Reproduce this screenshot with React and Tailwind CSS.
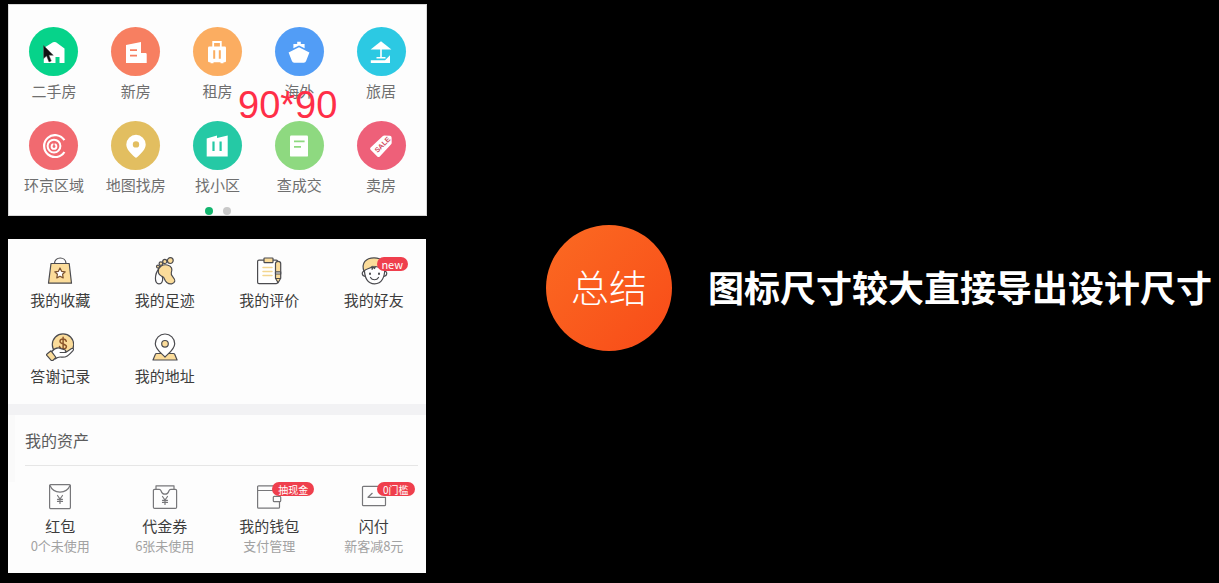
const line = '#4b4b4f';
const cream = '#fbdc9a';

function Glyph({ children }) {
  return (
    <svg viewBox="0 0 24 24" className="size-6" fill="none" aria-hidden="true">
      {children}
    </svg>
  );
}

function Outline({ children, stroke = line }) {
  return (
    <svg
      viewBox="0 0 28 28"
      className="size-7"
      fill="none"
      stroke={stroke}
      strokeWidth="1.2"
      strokeLinejoin="round"
      strokeLinecap="round"
      aria-hidden="true"
    >
      {children}
    </svg>
  );
}

const services = [
  {
    label: '二手房',
    color: 'bg-[#06d38a]',
    cursor: true,
    icon: (
      <path fill="#fff" d="M1.8 8 11 2.3q1.6-.8 3 0L22.5 8.4V23h-5v-6h-4v6H1.8z" />
    ),
  },
  {
    label: '新房',
    color: 'bg-[#f77f61]',
    icon: (
      <>
        <path fill="#fff" d="M2 5 17 2v11h4.5q1.2 0 1.2 1.2V23H2z" />
        <path stroke="#f77f61" strokeWidth="1.7" d="M6 10.2h7M6 15.7h7" />
      </>
    ),
  },
  {
    label: '租房',
    color: 'bg-[#fbad61]',
    icon: (
      <>
        <path stroke="#fff" strokeWidth="1.8" d="M8.2 7V2h7.6v5" />
        <rect x="3" y="6.5" width="18" height="15.7" rx="1.2" fill="#fff" />
        <path fill="#fff" d="M5.5 22h3v1.2h-3zM15.5 22h3v1.2h-3z" />
        <path stroke="#fbad61" strokeWidth="2" d="M9.2 10.3v8.4M14.8 10.3v8.4" />
      </>
    ),
  },
  {
    label: '海外',
    color: 'bg-[#529df6]',
    icon: (
      <>
        <path fill="#fff" d="M10.2 1.7h3.6v2.2h3.8v4.3L12 5.6 6.4 8.2V3.9h3.8z" />
        <path fill="#fff" d="m12 7.2 10.4 5.3-3.3 8.6q-.6 1.6-2.3 1.6H7.2q-1.7 0-2.3-1.6L1.6 12.5z" />
      </>
    ),
  },
  {
    label: '旅居',
    color: 'bg-[#2cc9e3]',
    icon: (
      <>
        <path fill="#fff" d="M12 1.3 22.4 9.6H1.6z" />
        <path stroke="#fff" strokeWidth="1.6" d="M12 9v9.500M7.500 17.700h9" />
        <path fill="#fff" d="M1.800 20.300H16l5-5V23H1.800z" />
      </>
    ),
  },
  {
    label: '环京区域',
    color: 'bg-[#f16a70]',
    icon: (
      <>
        <path stroke="#fff" strokeWidth="2.2" d="M22.4 6.2A11 11 0 1 0 22.4 18" />
        <circle cx="12" cy="12.1" r="6.4" stroke="#fff" strokeWidth="2" />
        <circle cx="12" cy="12.5" r="2.4" stroke="#fff" strokeWidth="1.9" />
        <path stroke="#f16a70" strokeWidth="1.2" d="M12 8.2v3" />
      </>
    ),
  },
  {
    label: '地图找房',
    color: 'bg-[#e2be60]',
    icon: (
      <path
        fill="#fff"
        fillRule="evenodd"
        d="M12 .8a9.7 9.7 0 0 0-9.7 9.7c0 5 4.7 8.7 8.4 12.6q1.3 1.1 2.6 0c3.7-3.9 8.4-7.6 8.4-12.6A9.7 9.7 0 0 0 12 .8m0 6.4a3.2 3.2 0 1 1 0 6.4 3.2 3.2 0 0 1 0-6.4"
      />
    ),
  },
  {
    label: '找小区',
    color: 'bg-[#25c9a5]',
    icon: (
      <>
        <path fill="#fff" d="M1.7 4.6 12 1.5v2.6l10.7-2.6v20.9h-21z" />
        <path stroke="#25c9a5" strokeWidth="2.2" d="M8.500 7.500v9.400M15.600 7.500v9.400" />
      </>
    ),
  },
  {
    label: '查成交',
    color: 'bg-[#8ed980]',
    icon: (
      <>
        <rect x="3" y="1.6" width="18" height="21" rx="1.2" fill="#fff" />
        <path stroke="#8ed980" strokeWidth="1.8" d="M7 7.4h10.600M7 12.800h7" />
      </>
    ),
  },
  {
    label: '卖房',
    color: 'bg-[#ee6079]',
    icon: (
      <>
        <path fill="#fff" d="M13.6 2.2q.8-.7 1.8-.7l5.5.3q1.6.1 1.700 1.700l.1 5.300q0 1-.8 1.800L10.800 22.500q-1.300 1.200-2.500 0L1.600 15.700q-1.100-1.200 0-2.300z" />
        <text
          x="0"
          y="0"
          transform="translate(8.500 19) rotate(-45)"
          fill="#d04a60"
          className="font-['Liberation_Sans'] text-[7px] font-bold"
        >
          SALE
        </text>
      </>
    ),
  },
];

const shortcuts = [
  {
    label: '我的收藏',
    icon: (
      <>
        <path d="M8.500 6.500C8.500-.8 20-.8 20 6.500" />
        <path fill={cream} d="M5 6.500h18.200l2.300 19.700h-23z" />
        <path
          fill="#fff"
          stroke="#79512f"
          d="m14 11 1.600 3.300 3.600.5-2.600 2.500.6 3.600-3.200-1.700-3.200 1.700.6-3.600-2.600-2.500 3.600-.5z"
        />
      </>
    ),
  },
  {
    label: '我的足迹',
    icon: (
      <>
        <path fill="#fff" d="M8 11.500C3.500 17 3 26.800 8 26.800c3 0 4-3 3.600-6z" />
        <path
          fill={cream}
          d="M7.300 14.500c0-5 4.700-7.500 9-6.500 4.800 1.100 5.200 4.600 4 7.600-1.200 3.400 4.200 5.200 3.500 8.500-.7 3-5 3.700-8 1.400-3-2.500-1.800-5-4.300-6-2.700-1-4.200-2.500-4.200-5z"
        />
        <circle cx="19.300" cy="3.600" r="2.900" fill={cream} />
        <circle cx="13.800" cy="4.400" r="2.100" fill={cream} />
        <circle cx="9.900" cy="6.600" r="1.800" fill={cream} />
        <circle cx="7" cy="9.600" r="1.500" fill={cream} />
      </>
    ),
  },
  {
    label: '我的评价',
    icon: (
      <>
        <rect x="2.600" y="3.200" width="20" height="23.400" rx="1.400" fill="#fff" />
        <rect x="9" y="1" width="9" height="4.600" rx=".6" fill={cream} />
        <path stroke="#f3d690" strokeWidth="1.500" d="M8 10.500h9M8 14.500h9M8 18.500h9" />
        <path fill={cream} d="M20.500 6.500q0-2.200 2.600-2.200t2.600 2.200v14.800l-2.600 4.500-2.600-4.500z" />
        <path d="M20.500 17h5.200v-2.200h-5.200zM20.800 21.500h4.600" fill="#fff" />
      </>
    ),
  },
  {
    label: '我的好友',
    badge: 'new',
    badgeSize: 'h-3.5 w-[31px] text-[11px]',
    icon: (
      <>
        <path fill="#fff" d="M4.500 14.500c-3-.7-3.200 4.500.6 4.800M24.500 14.500c3-.7 3.200 4.500-.6 4.800" />
        <path fill="#fff" d="M4.300 11c0 9.500 3.200 15.800 10.300 15.800S24.800 20.500 24.800 11L20 6H8z" />
        <path
          fill={cream}
          d="M4 14.500C1 6 6 .8 14 .8S27 6 25 14l-2.500-3-7-1.500-1 2-.5-2.200-2 3 .3-3c-3 3-6.800 2-8.300 5.200z"
        />
        <path d="M10 16.500v.5M19 16.500v.5" strokeWidth="2" />
        <path d="M10.500 20.500c1.700 3 6.300 3 8 0" />
      </>
    ),
  },
  {
    label: '答谢记录',
    icon: (
      <>
        <circle cx="17" cy="11.600" r="10.700" fill={cream} />
        <path
          stroke="#8b552b"
          strokeWidth="1.500"
          d="M20.300 8.300C19.600 5 13.800 5.300 14 8.500c.2 3 6.400 2 6.400 5.100 0 3.200-6.200 3.200-6.900-.1M17.100 4.200v13"
        />
        <path
          fill="#fff"
          d="M5.500 18.800c3-3.600 6.300-4.700 9.500-3.200l3.600 1.200c2 .8 1.500 2.700-.5 2.700h-4 5.500l6-4c2-.7 2.400 1 1.200 2.300-4 4.500-6.800 7-11.500 6.300-3-.5-4 .2-5.800 1.700z"
        />
        <path fill={cream} d="m1 21 4-3.200 5 6.700-3.200 3q-1 .6-1.800-.4l-4.200-4.700q-.6-.8.2-1.400z" />
      </>
    ),
  },
  {
    label: '我的地址',
    icon: (
      <>
        <path fill={cream} d="M5.500 20.500h17q.8 0 1.200.8l2.400 5.700H2l2.400-5.700q.3-.8 1.100-.8z" />
        <path fill="#fff" d="M14 1a9.700 9.700 0 0 0-9.700 9.700C4.300 16 9.500 19.500 14 24c4.500-4.500 9.700-8 9.700-13.300A9.700 9.700 0 0 0 14 1z" />
        <circle cx="14" cy="10.800" r="3.300" fill={cream} />
      </>
    ),
  },
];

const assets = [
  {
    label: '红包',
    note: '0个未使用',
    icon: (
      <>
        <rect x="3.600" y="2.600" width="20.800" height="24" rx="1" />
        <path d="M4 3.500c3.500 8.700 16.500 8.700 20 0" />
        <path d="m11.500 13.500 2.500 3.500 2.500-3.500M14 17v4.500M11.500 17.300h5M11.500 19.400h5" />
      </>
    ),
  },
  {
    label: '代金券',
    note: '6张未使用',
    icon: (
      <>
        <path d="M5 7V3.800h18V7" />
        <path d="M3.600 7.300h4.700c1 0 1.300.4 1.700 1.400 1.500 4.600 6.500 4.600 8 0 .4-1 .7-1.400 1.700-1.400h4.700q1.200 0 1.200 1.200v16.700q0 1.200-1.200 1.200H3.600q-1.200 0-1.200-1.200V8.500q0-1.200 1.200-1.200z" />
        <path d="m11.500 14.500 2.500 3.500 2.500-3.500M14 18v4.500M11.500 18.300h5M11.500 20.400h5" />
      </>
    ),
  },
  {
    label: '我的钱包',
    note: '支付管理',
    badge: '抽现金',
    badgeSize: 'h-3.5 w-[42px] text-[10px]',
    icon: (
      <>
        <path d="M24.500 14.300V3.800H3.600q-1 0-1 1v20.400q0 1 1 1h19.900q1 0 1-1v-5.500M2.600 8.500h21.900" />
        <rect x="18.300" y="14.300" width="7.400" height="5.400" rx="1" />
      </>
    ),
  },
  {
    label: '闪付',
    note: '新客减8元',
    badge: '0门槛',
    badgeSize: 'h-3.5 w-[38px] text-[10px]',
    icon: (
      <path d="M25.500 10V4.300h-22q-1 0-1 1v17.400q0 1 1 1h21q1 0 1-1v-7.400H8l4.200-4" />
    ),
  },
];

function Badge({ item }) {
  if (!item.badge) return null;
  return (
    <span
      className={`absolute left-[17px] top-0 flex items-center justify-center whitespace-nowrap rounded-full bg-[#ef3f4d] text-white ${item.badgeSize}`}
    >
      {item.badge}
    </span>
  );
}

function Cursor() {
  return (
    <svg viewBox="0 0 12 18" className="absolute left-3.5 top-[18px] h-[18px] w-3" aria-hidden="true">
      <path d="M.6.6v13l3-2.700 2.400 6 2.300-1-2.400-5.700h4.400z" fill="#111" stroke="#555" strokeWidth=".5" />
    </svg>
  );
}

function ServiceCard() {
  return (
    <section className="relative border border-[#d8d8d8] bg-[#fdfdfd] px-1 pt-[22px]">
      <ul className="grid grid-cols-5 gap-y-5">
        {services.map((s) => (
          <li key={s.label}>
            <a href="#" className="flex flex-col items-center gap-[5px]">
              <span className={`relative flex size-[49px] items-center justify-center rounded-full ${s.color}`}>
                <Glyph>{s.icon}</Glyph>
                {s.cursor && <Cursor />}
              </span>
              <span className="text-[15px] leading-5 text-[#6f6f6f]">{s.label}</span>
            </a>
          </li>
        ))}
      </ul>
      <div className="flex justify-center gap-2.5 pt-3">
        <button type="button" aria-label="第1页" className="size-2 rounded-full bg-[#12b56e]" />
        <button type="button" aria-label="第2页" className="size-2 rounded-full bg-[#c9c9c9]" />
      </div>
      <p className="absolute left-[229px] top-20 font-['Liberation_Sans'] text-[38px] leading-10 text-[#ff2e47]">
        90*90
      </p>
    </section>
  );
}

function ProfileCard() {
  return (
    <section className="mr-px bg-[#fdfdfd]">
      <ul className="grid grid-cols-4 gap-y-[23px] py-[18px]">
        {shortcuts.map((s) => (
          <li key={s.label}>
            <a href="#" className="flex flex-col items-center gap-[5px]">
              <span className="relative">
                <Outline>{s.icon}</Outline>
                <Badge item={s} />
              </span>
              <span className="text-[15px] leading-5 text-[#3c3c3c]">{s.label}</span>
            </a>
          </li>
        ))}
      </ul>
      <div className="h-[11px] bg-[#f2f2f4]" />
      <div className="border-l-[7px] border-[#fafafa] pb-4 pr-2">
        <h2 className="ml-2.5 border-b border-[#e6e6e6] py-[15px] text-base leading-5 text-[#5c5c5c]">
          我的资产
        </h2>
      </div>
      <ul className="grid grid-cols-4 pb-[17px]">
        {assets.map((a) => (
          <li key={a.label}>
            <a href="#" className="flex flex-col items-center">
              <span className="relative">
                <Outline stroke="#77777a">{a.icon}</Outline>
                <Badge item={a} />
              </span>
              <span className="mt-1.5 text-[15px] leading-5 text-[#3c3c3c]">{a.label}</span>
              <span className="text-[13px] leading-5 text-[#a2a2a2]">{a.note}</span>
            </a>
          </li>
        ))}
      </ul>
    </section>
  );
}

export default function App() {
  return (
    <main className="flex min-h-screen bg-black font-['Noto_Sans_CJK_SC',sans-serif]">
      <div className="flex w-[427px] shrink-0 flex-col gap-[23px] pb-2 pl-2 pt-1">
        <ServiceCard />
        <ProfileCard />
      </div>
      <div className="flex flex-1 items-center justify-end gap-9 pb-[7px] pr-[7px]">
        <div className="flex size-[126px] shrink-0 items-center justify-center rounded-full bg-linear-to-br from-[#fb6a22] to-[#f84a18] pb-1 text-[38px] font-light leading-none text-white">
          总结
        </div>
        <h1 className="whitespace-nowrap pb-1 text-4xl font-bold text-white">图标尺寸较大直接导出设计尺寸</h1>
      </div>
    </main>
  );
}
